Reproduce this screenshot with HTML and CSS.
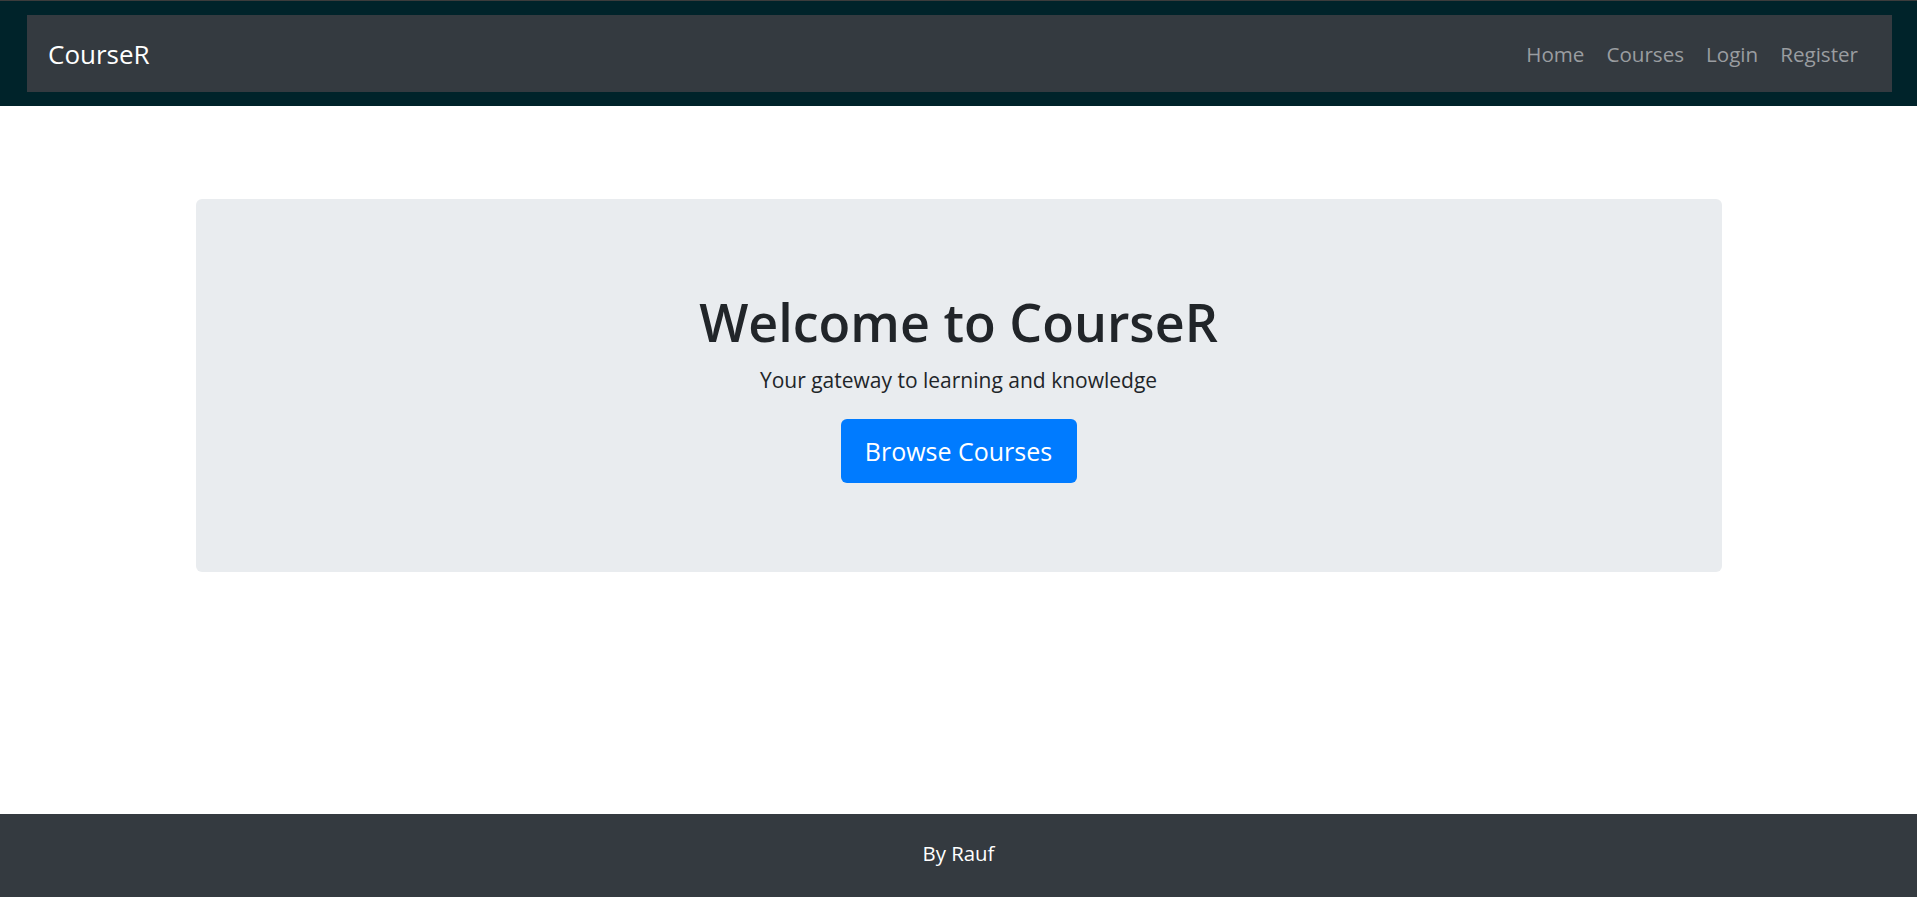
FILE: index.html
```html
<!DOCTYPE html>
<html lang="en">
<head>
<meta charset="utf-8">
<title>CourseR</title>
<link rel="stylesheet" href="styles.css">
</head>
<body>
<div class="page">
  <header class="header">
    <nav class="navbar">
      <a class="brand" href="#">CourseR</a>
      <ul class="nav">
        <li><a class="nav-link" href="#">Home</a></li>
        <li><a class="nav-link" href="#">Courses</a></li>
        <li><a class="nav-link" href="#">Login</a></li>
        <li><a class="nav-link" href="#">Register</a></li>
      </ul>
    </nav>
  </header>
  <main class="main">
    <section class="jumbotron">
      <h1 class="title">Welcome to CourseR</h1>
      <p class="lead">Your gateway to learning and knowledge</p>
      <a class="btn" href="#">Browse Courses</a>
    </section>
  </main>
  <footer class="footer">By Rauf</footer>
</div>
</body>
</html>
```

FILE: styles.css
```css
* { box-sizing: border-box; }
html, body { margin: 0; padding: 0; height: 100%; }
body {
  font-family: "Open Sans", "Noto Sans", sans-serif;
  color: #212529;
  background: #fff;
}
.page {
  min-height: 100vh;
  display: flex;
  flex-direction: column;
}
.header {
  background: #00232a;
  border-top: 1px solid #3c3c3c;
  padding: 14px 25px 14px 27px;
}
.navbar {
  background: #343a40;
  height: 77px;
  display: flex;
  align-items: center;
  justify-content: space-between;
  padding: 0 23px 0 21px;
}
.brand {
  color: #fff;
  text-decoration: none;
  font-size: 26px;
}
.nav {
  list-style: none;
  margin: 0;
  padding: 0;
  display: flex;
}
.nav-link {
  display: block;
  color: #9a9da0;
  text-decoration: none;
  font-size: 20.6px;
  padding: 0 11px;
}
.main {
  flex: 1;
  padding-top: 93px;
}
.jumbotron {
  width: 1526px;
  margin: 0 auto;
  height: 373px;
  background: #e9ecef;
  border-radius: 6px;
  display: flex;
  flex-direction: column;
  align-items: center;
  padding-top: 92px;
}
.title {
  margin: 0;
  font-size: 52px;
  font-weight: 600;
  line-height: 62px;
  color: #212529;
}
.lead {
  margin: 12px 0 0;
  font-size: 21px;
  line-height: 31px;
}
.btn {
  margin-top: 23px;
  width: 236px;
  height: 64px;
  background: #007bff;
  color: #fff;
  text-decoration: none;
  border-radius: 6px;
  font-size: 25px;
  display: flex;
  align-items: center;
  justify-content: center;
}
.footer {
  height: 83px;
  background: #343a40;
  color: #fff;
  font-size: 20.4px;
  display: flex;
  align-items: center;
  justify-content: center;
  padding-bottom: 5px;
}
```
